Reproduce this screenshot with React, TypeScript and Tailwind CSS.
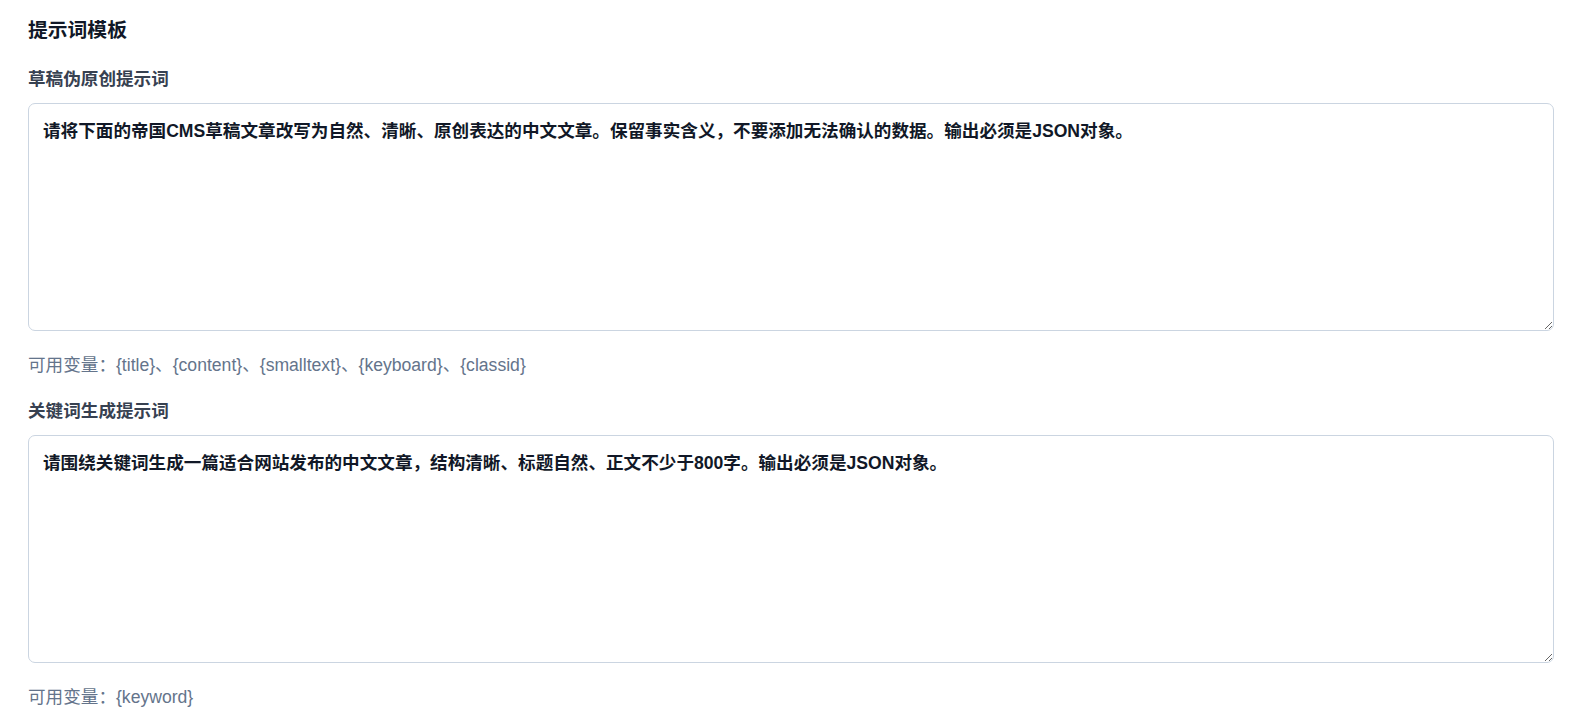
import React from "react";

const prompts = [
  {
    label: "草稿伪原创提示词",
    value:
      "请将下面的帝国CMS草稿文章改写为自然、清晰、原创表达的中文文章。保留事实含义，不要添加无法确认的数据。输出必须是JSON对象。",
    vars: "可用变量：{title}、{content}、{smalltext}、{keyboard}、{classid}",
  },
  {
    label: "关键词生成提示词",
    value:
      "请围绕关键词生成一篇适合网站发布的中文文章，结构清晰、标题自然、正文不少于800字。输出必须是JSON对象。",
    vars: "可用变量：{keyword}",
  },
];

const App = () => {
  return (
    <div className="min-h-screen bg-white pl-[28px] pr-[22px] pt-[16px] font-['Liberation_Sans','Noto_Sans_CJK_SC',sans-serif]">
      {/* section title */}
      <h2 className="text-[19.8px] leading-[28px] font-bold text-[#111827] mb-[22px]">
        提示词模板
      </h2>

      <div className="flex flex-col gap-[20px]">
        {prompts.map((p) => (
          <div key={p.label} className="flex flex-col">
            <label className="text-[17.6px] leading-[26px] font-bold text-[#374151] mb-[11px]">
              {p.label}
            </label>
            <textarea
              defaultValue={p.value}
              className="w-full h-[228px] block resize-y rounded-[7px] border border-[#cbd5e1] bg-white p-[14px] text-[17.6px] leading-[26px] font-bold text-[#111827] outline-none"
            />
            <p className="mt-[21px] text-[17.6px] leading-[26px] text-[#64748b]">{p.vars}</p>
          </div>
        ))}
      </div>
    </div>
  );
};

export default App;
